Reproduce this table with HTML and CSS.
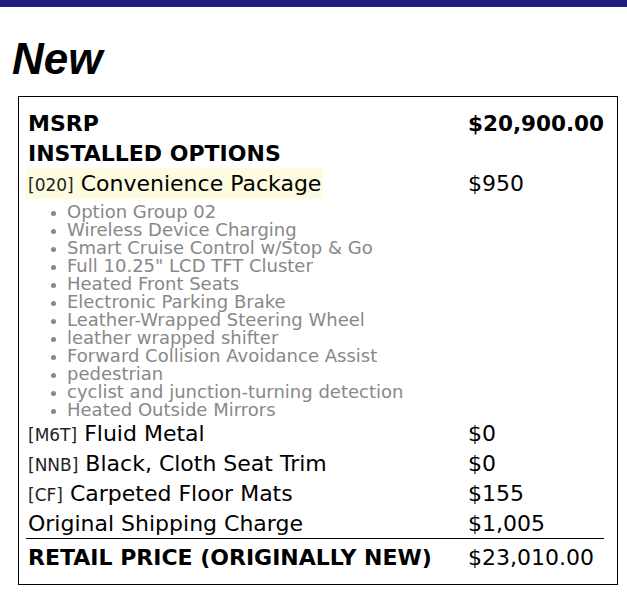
FILE: index.html
```html
<!DOCTYPE html>
<html>
<head>
<meta charset="utf-8">
<link rel="stylesheet" href="styles.css">
</head>
<body>
<div class="topbar"></div>
<h1 class="title">New</h1>
<div class="sticker">
  <div class="row bold"><span class="label">MSRP</span><span class="price msrp">$20,900.00</span></div>
  <div class="row bold"><span class="label">INSTALLED OPTIONS</span><span class="price"></span></div>
  <div class="row"><span class="label"><span class="hl"><span class="code">[020]</span> Convenience Package</span></span><span class="price">$950</span></div>
  <ul class="features">
    <li>Option Group 02</li>
    <li>Wireless Device Charging</li>
    <li>Smart Cruise Control w/Stop &amp; Go</li>
    <li>Full 10.25" LCD TFT Cluster</li>
    <li>Heated Front Seats</li>
    <li>Electronic Parking Brake</li>
    <li>Leather-Wrapped Steering Wheel</li>
    <li>leather wrapped shifter</li>
    <li>Forward Collision Avoidance Assist</li>
    <li>pedestrian</li>
    <li>cyclist and junction-turning detection</li>
    <li>Heated Outside Mirrors</li>
  </ul>
  <div class="row"><span class="label"><span class="code">[M6T]</span> Fluid Metal</span><span class="price">$0</span></div>
  <div class="row"><span class="label"><span class="code">[NNB]</span> Black, Cloth Seat Trim</span><span class="price">$0</span></div>
  <div class="row"><span class="label"><span class="code">[CF]</span> Carpeted Floor Mats</span><span class="price">$155</span></div>
  <div class="row"><span class="label">Original Shipping Charge</span><span class="price">$1,005</span></div>
  <div class="row total"><span class="label bold">RETAIL PRICE (ORIGINALLY NEW)</span><span class="price">$23,010.00</span></div>
</div>
</body>
</html>
```
FILE: styles.css
```css
html, body {
  margin: 0;
  padding: 0;
  background: #fff;
}
body {
  font-family: "DejaVu Sans", Verdana, sans-serif;
  color: #000;
}
.topbar {
  height: 7px;
  background: #1f1f7d;
}
.title {
  margin: 28px 0 13px 12px;
  font-family: "Liberation Sans", Arial, sans-serif;
  font-style: italic;
  font-weight: bold;
  font-size: 44px;
  line-height: 48px;
}
.sticker {
  margin-left: 18px;
  border: 1px solid #000;
  padding: 11px 13px 10px 7px;
  box-sizing: border-box;
  width: 600px;
}
.row {
  display: grid;
  grid-template-columns: 442px 1fr;
  height: 30px;
  align-items: center;
  font-size: 22px;
  white-space: nowrap;
}
.row .label {
  padding-left: 2px;
}
.bold {
  font-weight: bold;
}
.price {
  font-size: 22px;
}
.price.msrp {
  font-size: 21.5px;
}
.code {
  font-size: 17px;
  color: #222;
}
.hl {
  background: #fdfbe0;
  padding: 3px 2px;
  margin-left: -2px;
}
.features {
  margin: 5px 0 0 0;
  padding-left: 41px;
  color: #888;
  font-size: 18px;
  line-height: 18px;
}
.features li::marker {
  font-size: 15px;
}
.row:nth-of-type(4) {
  margin-top: -1px;
}
.total {
  border-top: 1px solid #000;
  height: 34px;
  padding-top: 1px;
}
```
